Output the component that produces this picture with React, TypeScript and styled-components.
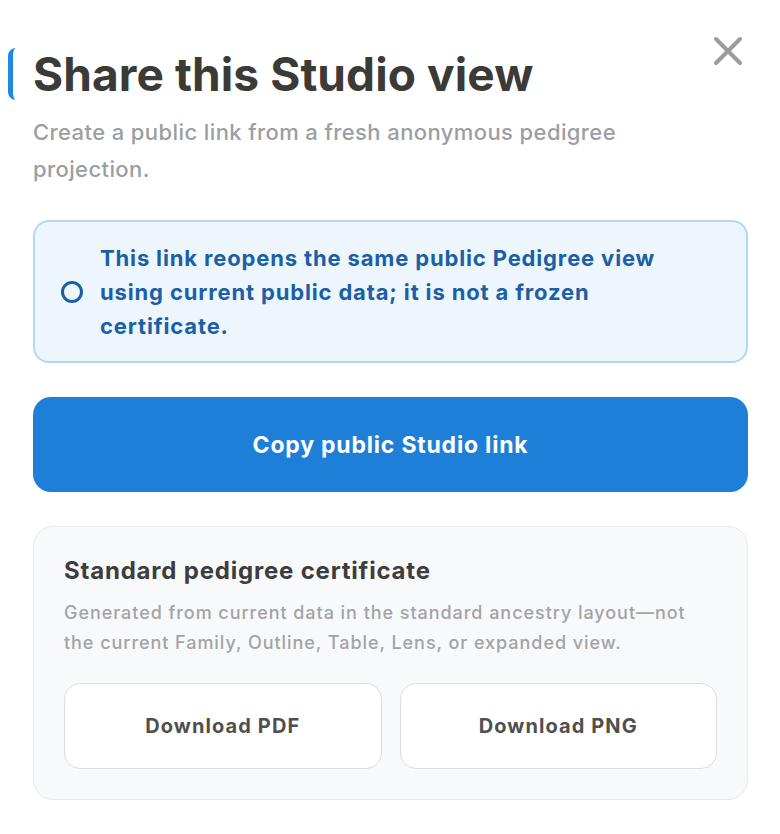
import styled, { createGlobalStyle } from "styled-components";

const GlobalStyle = createGlobalStyle`
  html, body {
    margin: 0;
    padding: 0;
    background: #ffffff;
    font-family: Inter, "Noto Sans", "Liberation Sans", sans-serif;
  }
  * {
    box-sizing: border-box;
  }
`;

const Dialog = styled.div`
  width: 780px;
  height: 834px;
  padding: 36px 32px 0 33px;
  display: flex;
  flex-direction: column;
`;

const Header = styled.div`
  display: flex;
  justify-content: space-between;
  align-items: flex-start;
`;

const Title = styled.h1`
  position: relative;
  margin: 0;
  font-size: 46px;
  font-weight: 700;
  letter-spacing: 0.1px;
  line-height: 76px;
  color: #3a3a37;

  &::before {
    content: "";
    position: absolute;
    left: -25px;
    top: 12px;
    width: 12px;
    height: 52px;
    border-left: 5px solid #1e88e5;
    border-radius: 8px 0 0 8px;
  }
`;

const CloseButton = styled.button`
  width: 40px;
  height: 40px;
  margin: -5px 0 0 0;
  padding: 0;
  border: none;
  background: none;
  display: flex;
  align-items: center;
  justify-content: center;
  color: #9a9ca0;
  cursor: pointer;
`;

const Subtitle = styled.p`
  margin: 2px 0 0;
  font-size: 22px;
  font-weight: 500;
  line-height: 37px;
  color: #9b9ea3;
  letter-spacing: 0.4px;
  max-width: 625px;
`;

const Notice = styled.div`
  margin-top: 32px;
  height: 143px;
  padding: 0 24px 0 26px;
  display: flex;
  align-items: center;
  gap: 17px;
  border: 2px solid #b7d6ee;
  border-radius: 16px;
  background: #eef6fd;
`;

const NoticeIcon = styled.span`
  flex: none;
  width: 22px;
  height: 22px;
  border: 3.5px solid #1a5ea8;
  border-radius: 50%;
`;

const NoticeText = styled.p`
  margin: 0;
  font-size: 22px;
  font-weight: 700;
  line-height: 34px;
  letter-spacing: 0.85px;
  color: #1b5fa6;
  max-width: 570px;
`;

const PrimaryButton = styled.button`
  margin-top: 34px;
  height: 95px;
  width: 100%;
  border: none;
  border-radius: 18px;
  background: #1e7fd8;
  color: #ffffff;
  font-family: inherit;
  font-size: 23px;
  font-weight: 700;
  letter-spacing: 0.8px;
  cursor: pointer;
`;

const Card = styled.section`
  margin-top: 34px;
  height: 274px;
  padding: 28px 30px 0;
  border: 1.5px solid #e8e9ec;
  border-radius: 20px;
  background: #f8f9fb;
`;

const CardTitle = styled.h2`
  margin: 0;
  font-size: 24px;
  font-weight: 700;
  line-height: 32px;
  letter-spacing: 0.8px;
  color: #3d3d3d;
`;

const CardText = styled.p`
  margin: 11px 0 0;
  font-size: 18px;
  font-weight: 500;
  line-height: 30px;
  letter-spacing: 0.95px;
  color: #a2a3a6;
  max-width: 640px;
`;

const ButtonRow = styled.div`
  margin-top: 25px;
  display: grid;
  grid-template-columns: 1fr 1fr;
  gap: 18px;
`;

const SecondaryButton = styled.button`
  height: 86px;
  border: 1.5px solid #dcdde0;
  border-radius: 16px;
  background: #ffffff;
  color: #4f4f4f;
  font-family: inherit;
  font-size: 20px;
  font-weight: 700;
  letter-spacing: 1.1px;
  cursor: pointer;
`;

const App = () => {
  return (
    <>
      <GlobalStyle />
      <Dialog>
        <Header>
          <Title>Share this Studio view</Title>
          <CloseButton aria-label="Close">
            <svg width="32" height="32" viewBox="0 0 32 32" fill="none">
              <path
                d="M4 4L28 28M28 4L4 28"
                stroke="currentColor"
                strokeWidth="4"
                strokeLinecap="round"
              />
            </svg>
          </CloseButton>
        </Header>
        <Subtitle>
          Create a public link from a fresh anonymous pedigree projection.
        </Subtitle>
        <Notice>
          <NoticeIcon />
          <NoticeText>
            This link reopens the same public Pedigree view using current public
            data; it is not a frozen certificate.
          </NoticeText>
        </Notice>
        <PrimaryButton>Copy public Studio link</PrimaryButton>
        <Card>
          <CardTitle>Standard pedigree certificate</CardTitle>
          <CardText>
            Generated from current data in the standard ancestry layout—not the
            current Family, Outline, Table, Lens, or expanded view.
          </CardText>
          <ButtonRow>
            <SecondaryButton>Download PDF</SecondaryButton>
            <SecondaryButton>Download PNG</SecondaryButton>
          </ButtonRow>
        </Card>
      </Dialog>
    </>
  );
};

export default App;
